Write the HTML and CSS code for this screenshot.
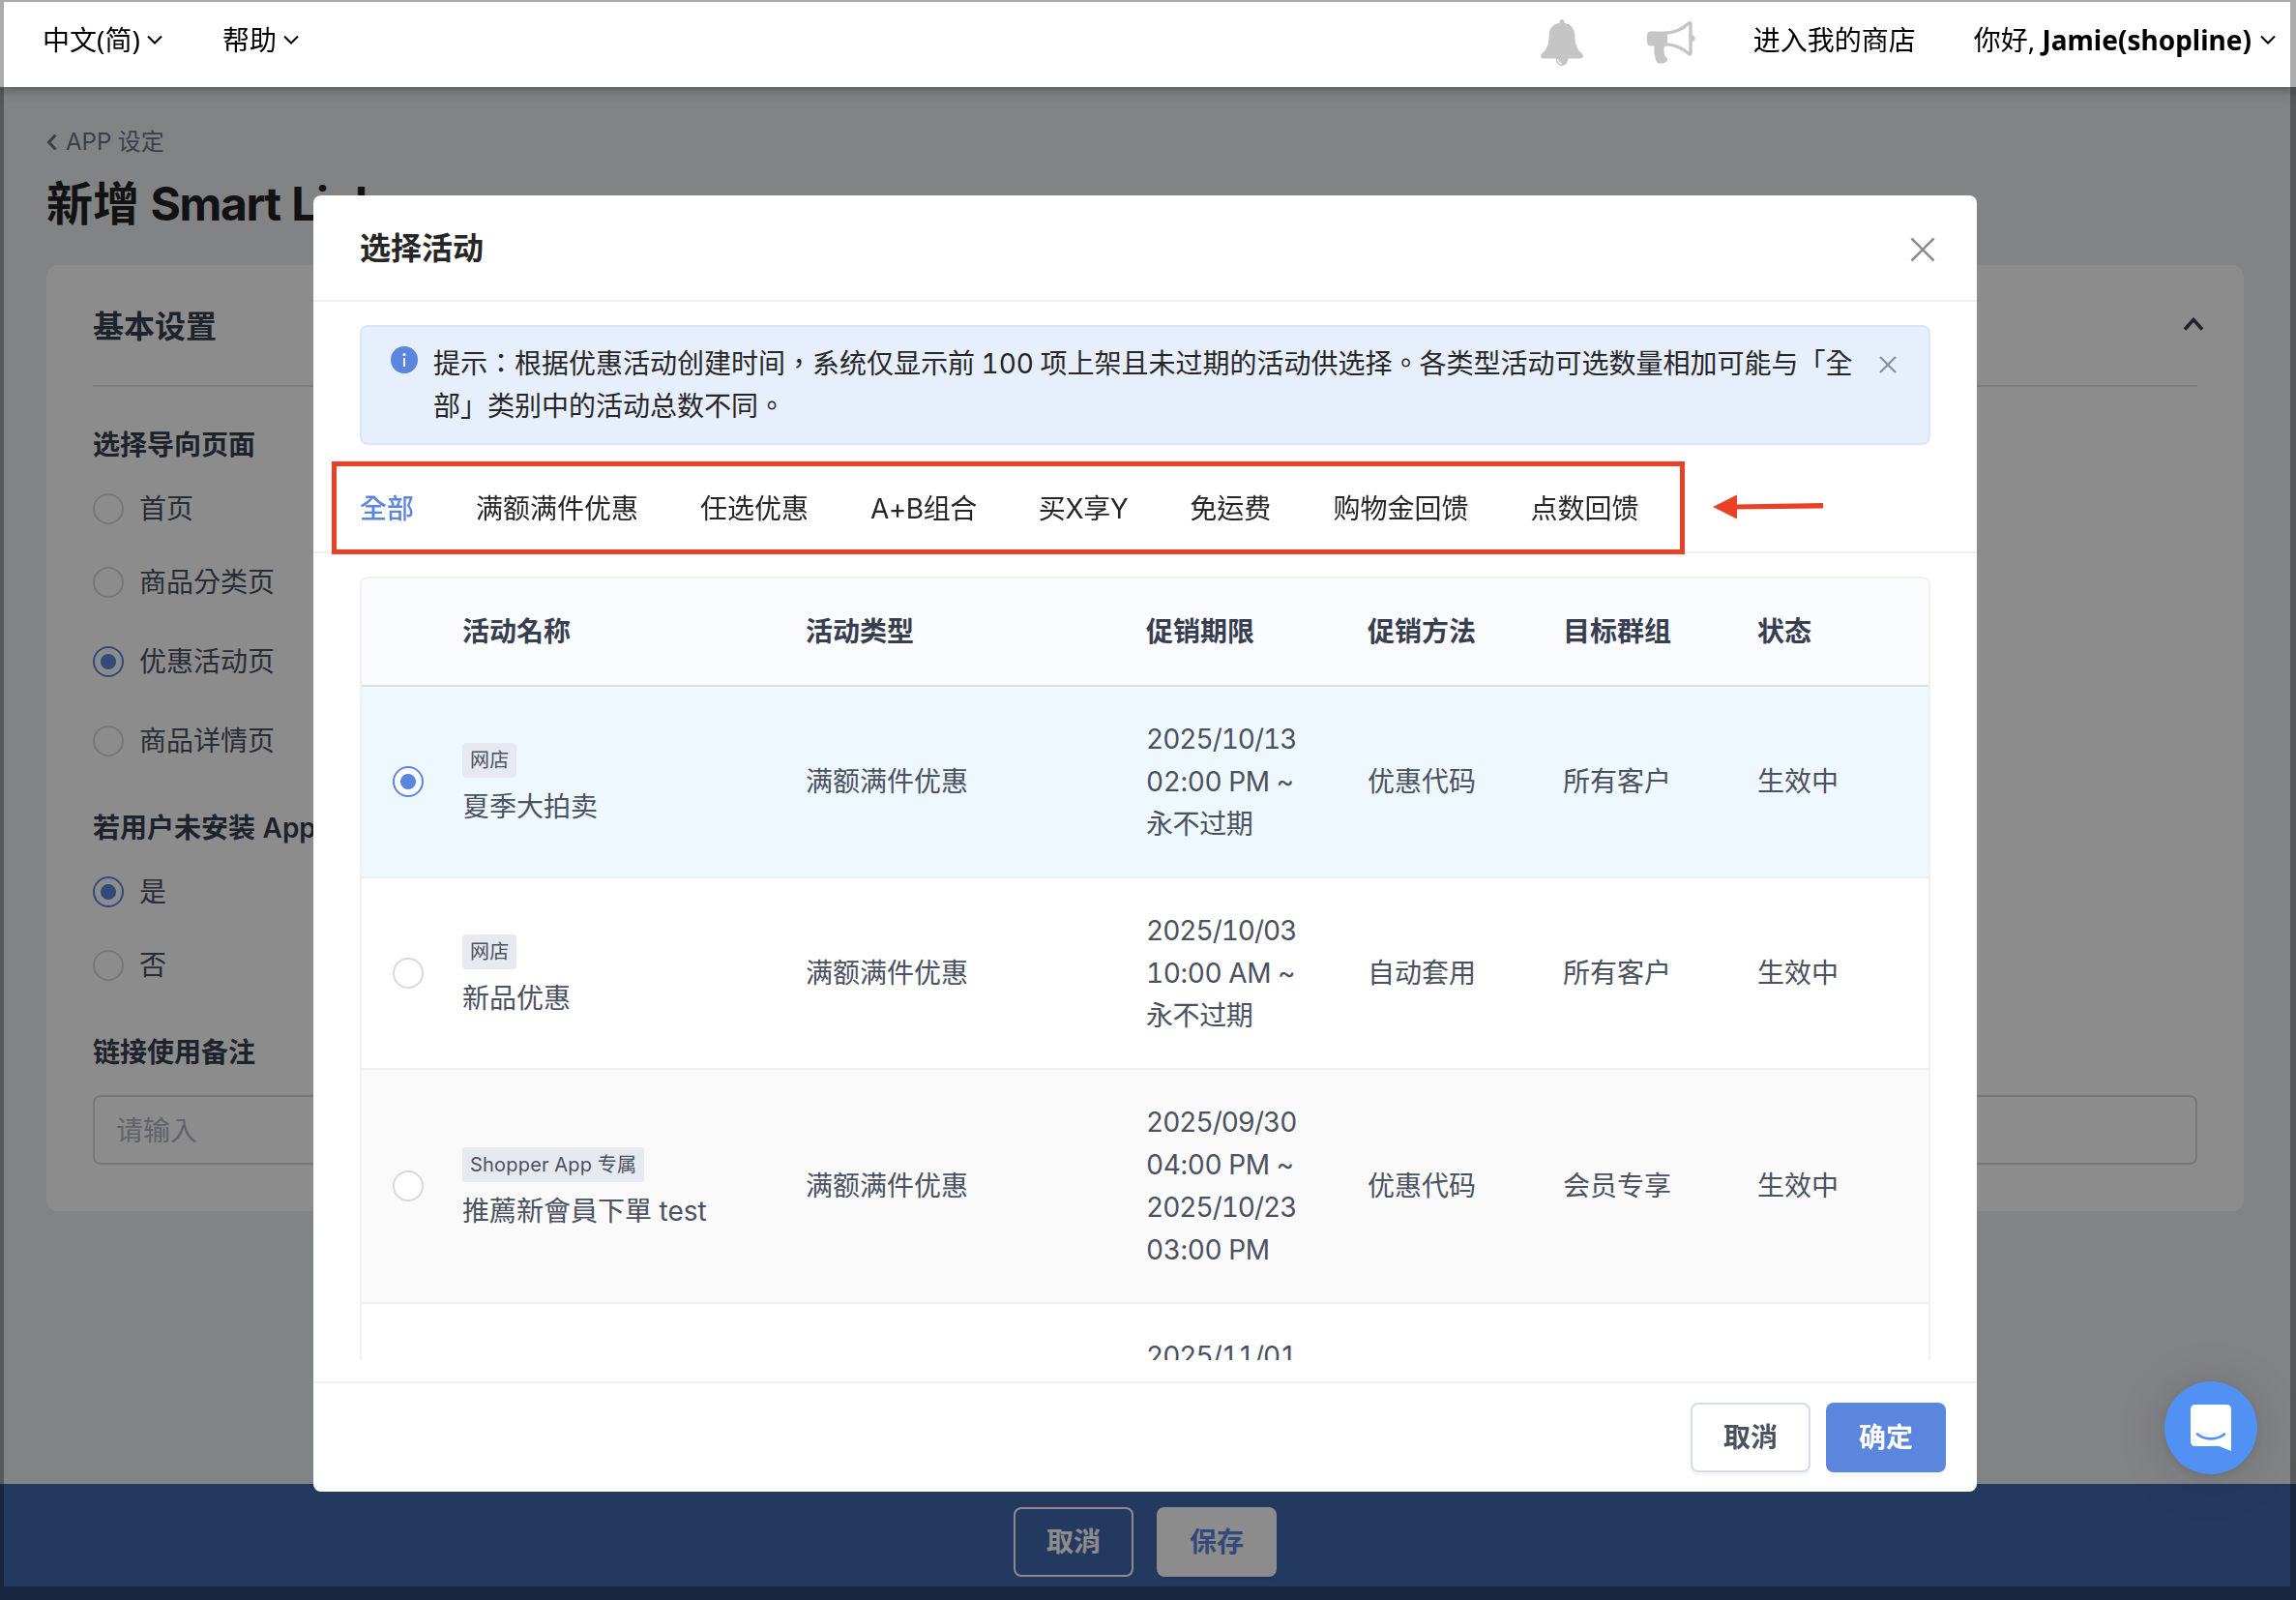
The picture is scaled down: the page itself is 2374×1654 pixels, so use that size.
FILE: index.html
```html
<!DOCTYPE html>
<html lang="zh-Hant">
<head>
    <meta charset="UTF-8">
    <meta name="viewport" content="width=device-width, initial-scale=1.0">
    <title>新增 Smart Link</title>
    <link rel="stylesheet" href="styles.css">
</head>
<body>
    <header class="topbar" lang="zh-Hans">
        <div class="topbar-item lang">中文(简) <svg class="caret" viewBox="0 0 16 10"><path d="M1 1.5l7 7 7-7"/></svg></div>
        <div class="topbar-item">帮助 <svg class="caret" viewBox="0 0 16 10"><path d="M1 1.5l7 7 7-7"/></svg></div>
        <svg class="bell" viewBox="0 0 44 48">
            <path d="M22 0c-1.600 0-2.600 1.500-2.500 3.800C12 5 8.700 10 8.600 18c-.2 8-2 13-7.400 17.500C-.8 37.700.2 40.500 3 40.500h12.500c.3 4.500 3 7.500 6.500 7.500s6.200-3 6.500-7.500H41c2.800 0 3.800-2.800 1.800-5C37.400 31 35.600 26 35.400 18 35.300 10 32 5 24.500 3.800 24.600 1.500 23.600 0 22 0z"/>
            <path class="bell-shine" d="M17.500 41c.4 2.800 2 4.500 4.500 4.800"/>
        </svg>
        <svg class="megaphone" viewBox="0 0 50 44">
            <path d="M4 10.500h17v15H19c-3 3-1 4.500-1.200 6-.3 2 .2 5 3.200 7 1 2-2 5-6 5.200-3.500 0-5.500-1-6-4C7.500 35 7 31 7.500 25.500H4c-2.500 0-4-2-4-4v-7c0-2.500 1.500-4 4-4z"/>
            <path class="horn" d="M19 12.200c9-.2 18-4.500 24.500-10.400q1.500-.8 1.500 1v30q0 1.800-1.500 1C37 28 29 24 19 23.600"/>
            <path d="M46 14c5 1 5 6 0 7.500z"/>
        </svg>
        <div class="topbar-item store">进入我的商店</div>
        <div class="topbar-item user">你好, <b>Jamie(shopline)</b><svg class="caret" viewBox="0 0 16 10"><path d="M1 1.500l7 7 7-7"/></svg></div>
    </header>

    <main class="page">
        <div class="back"><svg viewBox="0 0 11 16"><path d="M9.500 .5L2.500 8l7 7.500"/></svg>APP 设定</div>
        <h1>新增<span> Smart Link</span></h1>

        <section class="card">
            <div class="card-head">
                <h2>基本设置</h2>
                <svg viewBox="0 0 22 14"><path d="M2 12.500l9-10 9 10"/></svg>
            </div>
            <h3>选择导向页面</h3>
            <div class="option"><span class="radio"></span>首页</div>
            <div class="option"><span class="radio"></span>商品分类页</div>
            <div class="option spaced"><span class="radio checked"></span>优惠活动页</div>
            <div class="option spaced"><span class="radio"></span>商品详情页</div>
            <h3 class="second">若用户未安装 App</h3>
            <div class="option"><span class="radio checked"></span>是</div>
            <div class="option"><span class="radio"></span>否</div>
            <h3 class="third">链接使用备注</h3>
            <div class="input">请输入</div>
        </section>
    </main>

    <footer class="savebar">
        <button class="btn btn-ghost">取消</button>
        <button class="btn btn-light">保存</button>
    </footer>

    <div class="mask"></div>

    <div class="modal">
        <div class="modal-head">
            <h2>选择活动</h2>
            <svg viewBox="0 0 26 26"><path d="M1.500 1.500l23 23M24.500 1.500l-23 23"/></svg>
        </div>

        <div class="alert">
            <svg class="info" viewBox="0 0 28 28"><circle cx="14" cy="14" r="14"/><path d="M14 12v9"/><circle class="dot" cx="14" cy="8.500" r="1.500"/></svg>
            <p>提示：根据优惠活动创建时间，系统仅显示前 100 项上架且未过期的活动供选择。各类型活动可选数量相加可能与「全<br>部」类别中的活动总数不同。</p>
            <svg class="alert-close" viewBox="0 0 18 18"><path d="M1 1l16 16M17 1L1 17"/></svg>
        </div>

        <nav class="tabs">
            <span class="active">全部</span>
            <span>满额满件优惠</span>
            <span>任选优惠</span>
            <span class="mixed">A+B组合</span>
            <span class="mixed">买X享Y</span>
            <span>免运费</span>
            <span>购物金回馈</span>
            <span>点数回馈</span>
            <!-- annotation on top of the tabs -->
            <div class="highlight"></div>
            <svg class="arrow" viewBox="0 0 116 28"><path d="M1 14L26 1.500v25z"/><path d="M25 11.500L115 10v5.500L25 16.500z"/></svg>
        </nav>

        <div class="table-wrap">
            <table>
                <colgroup>
                    <col class="col-radio">
                    <col class="col-name">
                    <col class="col-type">
                    <col class="col-date">
                    <col class="col-method">
                    <col class="col-group">
                    <col>
                </colgroup>
                <thead>
                    <tr>
                        <th></th>
                        <th>活动名称</th>
                        <th>活动类型</th>
                        <th>促销期限</th>
                        <th>促销方法</th>
                        <th>目标群组</th>
                        <th>状态</th>
                    </tr>
                </thead>
                <tbody>
                    <tr class="selected">
                        <td><span class="radio checked"></span></td>
                        <td><span class="tag">网店</span>夏季大拍卖</td>
                        <td>满额满件优惠</td>
                        <td class="date"><span class="day">2025/10/13</span><br>02:00 PM ~<br>永不过期</td>
                        <td>优惠代码</td>
                        <td>所有客户</td>
                        <td>生效中</td>
                    </tr>
                    <tr>
                        <td><span class="radio"></span></td>
                        <td><span class="tag">网店</span>新品优惠</td>
                        <td>满额满件优惠</td>
                        <td class="date"><span class="day">2025/10/03</span><br>10:00 AM ~<br>永不过期</td>
                        <td>自动套用</td>
                        <td>所有客户</td>
                        <td>生效中</td>
                    </tr>
                    <tr class="hover">
                        <td><span class="radio"></span></td>
                        <td><span class="tag">Shopper App 专属</span>推薦新會員下單 test</td>
                        <td>满额满件优惠</td>
                        <td class="date"><span class="day">2025/09/30</span><br>04:00 PM ~<br><span class="day">2025/10/23</span><br>03:00 PM</td>
                        <td>优惠代码</td>
                        <td>会员专享</td>
                        <td>生效中</td>
                    </tr>
                    <tr>
                        <td></td>
                        <td></td>
                        <td></td>
                        <td class="date"><span class="day">2025/11/01</span></td>
                        <td></td>
                        <td></td>
                        <td></td>
                    </tr>
                </tbody>
            </table>
        </div>

        <div class="modal-foot">
            <button class="btn btn-default">取消</button>
            <button class="btn btn-primary">确定</button>
        </div>
    </div>

    <div class="chat">
        <svg viewBox="0 0 42 48">
            <path class="bubble" d="M5 0h32q5 0 5 5v43l-12.500-5H5q-5 0-5-5V5q0-5 5-5z"/>
            <path class="smile" d="M7 30.500c8 6.500 20 6.500 28 0"/>
        </svg>
    </div>

    <div class="frame"></div>
</body>
</html>
```

FILE: styles.css
```css
:root {
    --primary: #5b86de;
    --text: #4a5160;
    --heading: #373e4f;
    --line: #f0f0f0;
    --red: #ea4025;
}

* {
    margin: 0;
    padding: 0;
    box-sizing: border-box;
}

body {
    width: 100vw;
    height: 100vh;
    overflow: hidden;
    display: flex;
    flex-direction: column;
    background: #edeff3;
    color: var(--text);
    font-family: Inter, "Noto Sans CJK TC", sans-serif;
    font-size: 28px;
    font-variant-numeric: tabular-nums;
    line-height: 44px;
}

svg {
    display: block;
    flex: none;
    fill: none;
    stroke: currentColor;
}

/* top bar */
.topbar {
    position: relative;
    z-index: 2;
    flex: none;
    height: 90px;
    padding: 0 21px 8px 44px;
    display: flex;
    align-items: center;
    background: #fff;
    color: #000;
    font-family: "Noto Sans", "Noto Sans CJK SC", sans-serif;
    box-shadow: 0 2px 12px rgba(0, 0, 0, 0.4);
}

.topbar-item {
    display: flex;
    align-items: center;
    white-space: pre;
}

.lang {
    margin-right: 62px;
}

.caret {
    width: 16px;
    height: 10px;
    stroke-width: 2;
}

.user .caret {
    margin-left: 9px;
}

.bell {
    width: 44px;
    height: 48px;
    margin: 6px 66px 0 auto;
    fill: #c5c5c5;
    stroke: none;
}

.bell .bell-shine {
    fill: none;
    stroke: #fff;
    stroke-width: 1.2;
}

.megaphone {
    width: 50px;
    height: 44px;
    margin: 6px 60px 0 0;
    fill: #c5c5c5;
    stroke: none;
}

.megaphone .horn {
    fill: none;
    stroke: #c5c5c5;
    stroke-width: 3.4;
}

.store {
    margin-right: 60px;
}

/* page behind the dialog */
.page {
    flex: 1;
    padding: 35px 54px 0 48px;
}

.back {
    display: flex;
    align-items: center;
    gap: 9px;
    color: #6c7487;
    font-size: 24px;
}

.back svg {
    width: 11px;
    height: 16px;
    stroke-width: 3;
}

h1 {
    margin-top: 12px;
    color: #212121;
    font-size: 48px;
    font-weight: 700;
    line-height: 60px;
}

h1 span {
    letter-spacing: -1.4px;
}

.card {
    height: 978px;
    margin-top: 33px;
    padding: 0 48px;
    background: #fff;
    border-radius: 12px;
}

.card-head {
    height: 126px;
    display: flex;
    align-items: center;
    justify-content: space-between;
    border-bottom: 2px solid #e6e6e6;
}

.card-head h2 {
    padding-top: 3px;
    color: var(--heading);
    font-size: 32px;
    font-weight: 600;
}

.card-head svg {
    width: 22px;
    height: 14px;
    margin: -2px -7px 0 0;
    color: var(--heading);
    stroke-width: 3.5;
}

h3 {
    margin: 38px 0 22px;
    color: var(--heading);
    font-size: 28px;
    font-weight: 600;
}

h3.second {
    margin-top: 46px;
}

h3.third {
    margin-top: 46px;
}

.option {
    display: flex;
    align-items: center;
    gap: 16px;
    margin-bottom: 32px;
}

.option.spaced {
    margin: 38px 0 0;
}

.radio {
    flex: none;
    display: block;
    width: 32px;
    height: 32px;
    background: #fff;
    border: 2px solid #d9d9d9;
    border-radius: 50%;
}

.radio.checked {
    border-color: var(--primary);
    background: radial-gradient(circle, var(--primary) 7.5px, #fff 8.5px);
}

.input {
    height: 72px;
    padding: 0 22px;
    border: 2px solid #d9d9d9;
    border-radius: 8px;
    color: #b0b5c1;
    line-height: 70px;
}

.savebar {
    flex: none;
    height: 120px;
    padding: 24px 6px 0 0;
    display: flex;
    justify-content: center;
    gap: 24px;
    background: #4368af;
}

.btn {
    width: 124px;
    height: 72px;
    border: 2px solid transparent;
    border-radius: 8px;
    font: 600 28px/66px Inter, "Noto Sans CJK TC", sans-serif;
    box-shadow: 0 4px 0 rgba(0, 0, 0, 0.03);
}

.btn-ghost {
    background: none;
    border-color: #fff;
    color: #fff;
    box-shadow: none;
}

.btn-light {
    background: #fff;
    color: var(--primary);
}

.btn-default {
    background: #fff;
    border-color: #d5dde6;
    color: var(--text);
}

.btn-primary {
    background: var(--primary);
    color: #fff;
}

.mask {
    position: fixed;
    inset: 0;
    z-index: 1;
    background: rgba(0, 0, 0, 0.45);
}

/* dialog */
.modal {
    position: fixed;
    top: 202px;
    left: 324px;
    z-index: 3;
    width: 1720px;
    height: 1340px;
    display: flex;
    flex-direction: column;
    background: #fff;
    border-radius: 8px;
}

.modal-head {
    flex: none;
    height: 110px;
    padding: 0 43px 0 48px;
    display: flex;
    align-items: center;
    justify-content: space-between;
    border-bottom: 2px solid var(--line);
}

.modal-head h2 {
    padding-top: 2px;
    color: #262626;
    font-size: 32px;
    font-weight: 600;
}

.modal-head svg {
    width: 26px;
    height: 26px;
    margin-top: 4px;
    color: #8c8c8c;
    stroke-width: 2.5;
}

.alert {
    flex: none;
    height: 124px;
    margin: 24px 48px 0;
    padding: 16px 33px 0 30px;
    display: flex;
    background: #e7eefc;
    border: 2px solid #d6e6fe;
    border-radius: 8px;
    color: #262626;
}

.alert p {
    flex: 1;
    margin-left: 16px;
    white-space: nowrap;
    word-spacing: -1px;
}

.info {
    width: 28px;
    height: 28px;
    margin-top: 4px;
    fill: var(--primary);
    stroke: none;
}

.info path {
    stroke: #fff;
    stroke-width: 2;
}

.info .dot {
    fill: #fff;
}

.alert-close {
    width: 18px;
    height: 18px;
    margin-top: 14px;
    color: #868b94;
    stroke-width: 2;
}

.tabs {
    position: relative;
    flex: none;
    height: 112px;
    padding: 44px 48px 0;
    display: flex;
    gap: 64px;
    border-bottom: 2px solid var(--line);
    color: #262626;
    white-space: nowrap;
}

.tabs .active {
    color: var(--primary);
    font-weight: 500;
}

.tabs .mixed {
    letter-spacing: -0.4px;
}

.highlight {
    position: absolute;
    top: 17px;
    left: 19px;
    width: 1399px;
    height: 96px;
    border: 5px solid var(--red);
}

.arrow {
    position: absolute;
    top: 50px;
    left: 1446px;
    width: 116px;
    height: 28px;
    fill: var(--red);
    stroke: none;
}

.table-wrap {
    flex: none;
    height: 810px;
    margin: 24px 48px 22px;
    overflow: hidden;
}

table {
    width: 100%;
    table-layout: fixed;
    border: 2px solid var(--line);
    border-radius: 8px 8px 0 0;
    border-collapse: separate;
    border-spacing: 0;
    overflow: hidden;
}

.col-radio { width: 104px; }
.col-name { width: 355px; }
.col-type { width: 352px; }
.col-date { width: 229px; }
.col-method { width: 202px; }
.col-group { width: 201px; }

th,
td {
    padding: 32px 0;
    border-bottom: 2px solid var(--line);
    text-align: left;
    vertical-align: middle;
    white-space: nowrap;
}

th {
    height: 112px;
    background: #fbfcff;
    border-color: #d5dde6;
    color: var(--heading);
    font-weight: 600;
}

td:first-child {
    padding-left: 32px;
}

.date {
    letter-spacing: -0.4px;
}

.day {
    letter-spacing: -1px;
}

.selected td {
    background: #f0f8ff;
    border-color: #e9f0f5;
}

.hover td {
    background: #fafafa;
}

.tag {
    display: block;
    width: max-content;
    height: 36px;
    margin: 8px 0;
    padding: 0 8px;
    background: #e6eaf0;
    border-radius: 4px;
    font-size: 20px;
    letter-spacing: 0.2px;
    line-height: 36px;
}

.modal-foot {
    flex: 1;
    padding: 20px 32px 0;
    display: flex;
    justify-content: flex-end;
    gap: 16px;
    border-top: 2px solid var(--line);
}

/* chat launcher */
.chat {
    position: fixed;
    top: 1428px;
    left: 2238px;
    z-index: 4;
    width: 96px;
    height: 96px;
    display: flex;
    align-items: center;
    justify-content: center;
    background: #5091f3;
    border-radius: 50%;
    box-shadow: 0 2px 12px rgba(0, 0, 0, 0.1), 0 4px 64px rgba(0, 0, 0, 0.16);
}

.chat svg {
    width: 42px;
    height: 48px;
}

.bubble {
    fill: #fff;
    stroke: none;
}

.smile {
    stroke: #5091f3;
    stroke-width: 2.6;
    stroke-linecap: round;
}

/* dark window edge */
.frame {
    position: fixed;
    inset: 0;
    z-index: 5;
    border: solid rgba(0, 0, 0, 0.33);
    border-width: 2px 6px 14px 4px;
    pointer-events: none;
}
```
